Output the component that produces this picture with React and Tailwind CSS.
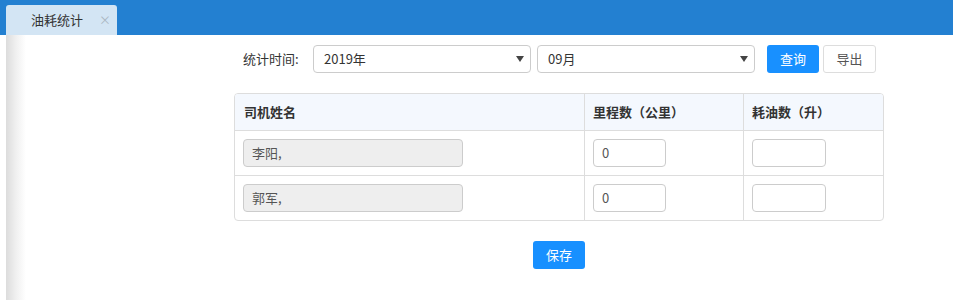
import React from "react";

const font = { fontFamily: '"Noto Sans CJK SC", "Noto Sans", sans-serif' };

function Select({ value, width }) {
  return (
    <div className={`${width} h-[28px] border border-[#ccc] rounded-[4px] bg-white flex items-center justify-between pl-[10px] pr-[6px] text-[13px] text-[#333]`}>
      <span>{value}</span>
      <svg width="8" height="6" viewBox="0 0 8 6"><path d="M0 0 L8 0 L4 6 Z" fill="#444" /></svg>
    </div>
  );
}

function Input({ value, w, gray }) {
  return (
    <div className={`${w} h-[28px] border border-[#ccc] rounded-[4px] ${gray ? "bg-[#eee]" : "bg-white"} flex items-center px-[8px] text-[13px] text-[#555]`}>
      {value}
    </div>
  );
}

export default function App() {
  const rows = [
    { name: "李阳,", km: "0" },
    { name: "郭军,", km: "0" },
  ];
  return (
    <div className="w-[953px] h-[300px] bg-white overflow-hidden" style={font}>
      <div className="h-[35px] bg-[#2380d1] flex items-end pl-[6px]">
        <div className="w-[111px] h-[30px] bg-[#d3e5f4] rounded-t-[3px] flex items-center pl-[25px] text-[13px] text-[#333]">
          <span>油耗统计</span>
          <span className="ml-[16px] text-[12px] text-[#aab6c2]">×</span>
        </div>
      </div>
      <div className="flex h-[265px]">
        <div className="w-[6px] shrink-0" />
        <div className="w-[20px] shrink-0 bg-gradient-to-r from-[#dcdcdc] via-[#f0f0f0] to-white" />
        <div className="flex-1 pl-[208px]">
          <div className="flex items-center mt-[10px] text-[13px] text-[#333]">
            <span className="w-[79px] pl-[9px]">统计时间:</span>
            <Select value="2019年" width="w-[218px]" />
            <div className="w-[6px]" />
            <Select value="09月" width="w-[218px]" />
            <button className="ml-[12px] w-[52px] h-[28px] rounded-[3px] bg-[#1890ff] text-white text-[13px]">查询</button>
            <button className="ml-[4px] w-[53px] h-[28px] rounded-[3px] bg-white border border-[#ddd] text-[#555] text-[13px]">导出</button>
          </div>
          <div className="mt-[20px] w-[650px] border border-[#ddd] rounded-[4px] overflow-hidden text-[13px] text-[#333]">
            <div className="flex h-[36px] bg-[#f4f8fe] font-bold">
              <div className="w-[349px] flex items-center pl-[9px]">司机姓名</div>
              <div className="w-[159px] border-l border-[#ddd] flex items-center pl-[8px]">里程数（公里）</div>
              <div className="flex-1 border-l border-[#ddd] flex items-center pl-[8px]">耗油数（升）</div>
            </div>
            {rows.map((r, i) => (
              <div key={i} className="flex h-[45px] border-t border-[#ddd]">
                <div className="w-[349px] flex items-center pl-[8px]">
                  <Input value={r.name} w="w-[220px]" gray />
                </div>
                <div className="w-[159px] border-l border-[#ddd] flex items-center pl-[8px]">
                  <Input value={r.km} w="w-[73px]" />
                </div>
                <div className="flex-1 border-l border-[#ddd] flex items-center pl-[8px]">
                  <Input value="" w="w-[74px]" />
                </div>
              </div>
            ))}
          </div>
          <div className="mt-[20px] w-[650px] flex justify-center">
            <button className="w-[52px] h-[28px] rounded-[3px] bg-[#1890ff] text-white text-[13px]">保存</button>
          </div>
        </div>
      </div>
    </div>
  );
}
